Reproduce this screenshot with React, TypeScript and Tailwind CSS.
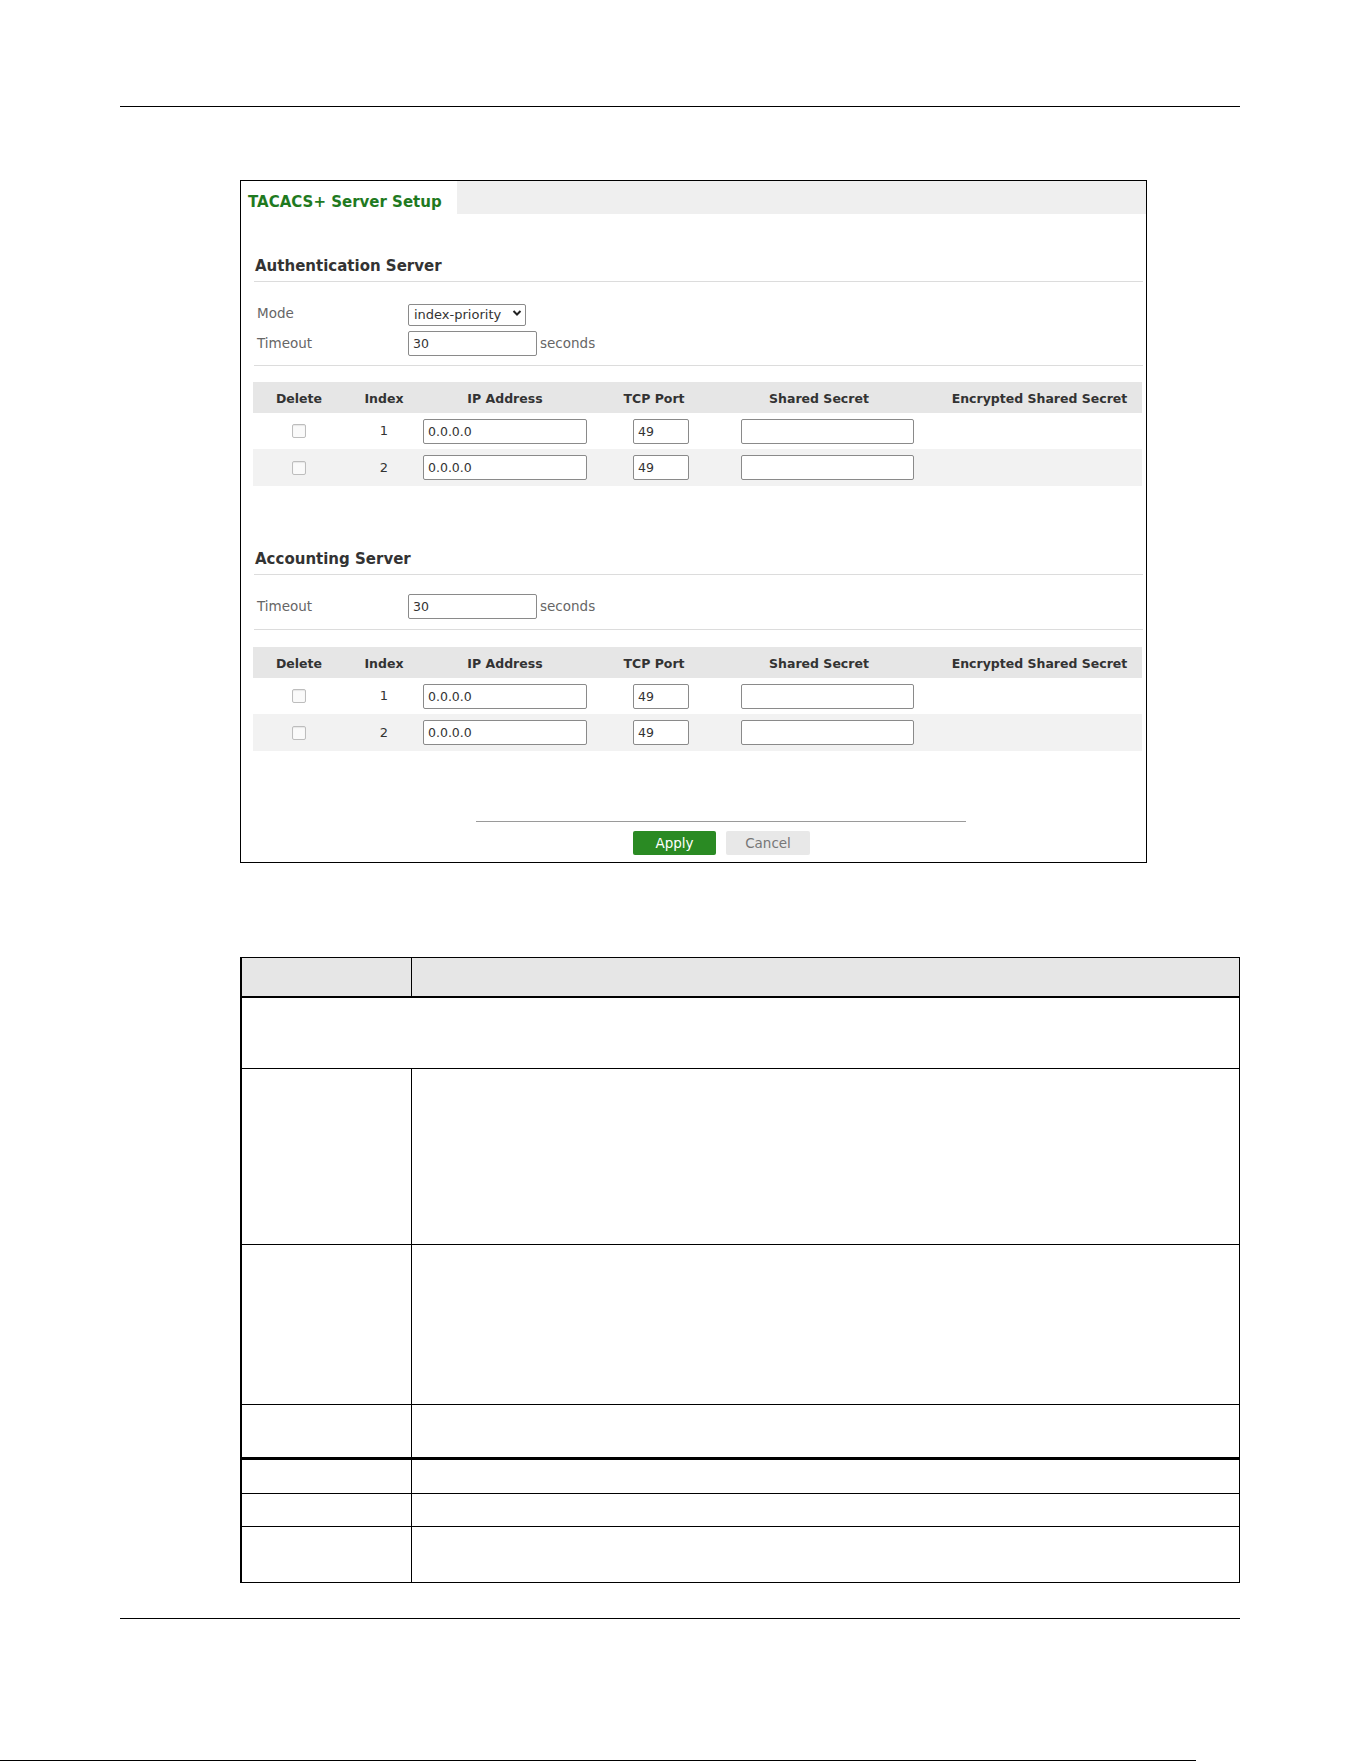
import React from "react";

function Check() {
  return (
    <input
      type="checkbox"
      className="appearance-none w-[14px] h-[14px] rounded-[2px] border border-[#bdbdbd] bg-[#fafafa] shadow-[inset_0_1px_1px_rgba(0,0,0,0.08)]"
    />
  );
}

function TextBox({ value, className }: { value: string; className: string }) {
  return (
    <input
      type="text"
      defaultValue={value}
      className={
        "h-[25px] border border-[#8a8a8a] rounded-[2px] bg-white px-[4px] text-[12.5px] text-[#333] outline-none " +
        className
      }
    />
  );
}

function ServerTable() {
  const rows = [1, 2];
  return (
    <div className="w-[889px]">
      <div className="grid grid-cols-[92px_78px_164px_134px_196px_1fr] h-[31px] pt-[4px] items-center bg-[#e6e6e6] text-[12.5px] font-bold text-[#333]">
        <div className="text-center">Delete</div>
        <div className="text-center">Index</div>
        <div className="text-center">IP Address</div>
        <div className="text-center">TCP Port</div>
        <div className="text-center">Shared Secret</div>
        <div className="text-center pl-[20px]">Encrypted Shared Secret</div>
      </div>
      {rows.map((i) => (
        <div
          key={i}
          className={
            "grid grid-cols-[92px_78px_164px_134px_196px_1fr] items-center text-[13px] text-[#333] " +
            (i === 1 ? "h-[36px] bg-white" : "h-[37px] bg-[#f2f2f2]")
          }
        >
          <div className="flex justify-center">
            <Check />
          </div>
          <div className="text-center">{i}</div>
          <div>
            <TextBox value="0.0.0.0" className="w-[164px]" />
          </div>
          <div>
            <TextBox value="49" className="ml-[46px] w-[56px]" />
          </div>
          <div>
            <TextBox value="" className="ml-[20px] w-[173px]" />
          </div>
          <div />
        </div>
      ))}
    </div>
  );
}

function Heading({ children }: { children: React.ReactNode }) {
  return (
    <div className="pl-[1px] pb-[5px] border-b border-[#dcdcdc] text-[15px] leading-[20px] font-bold text-[#333]">
      {children}
    </div>
  );
}

function TimeoutRow({ mt }: { mt: string }) {
  return (
    <div className={"flex items-center h-[25px] pl-[3px] " + mt}>
      <div className="w-[151px] text-[13.5px] text-[#666]">Timeout</div>
      <TextBox value="30" className="w-[129px]" />
      <span className="ml-[3px] text-[13.5px] text-[#666]">seconds</span>
    </div>
  );
}

export default function App() {
  return (
    <div className="w-[1361px] h-[1761px] bg-white font-['DejaVu_Sans',sans-serif] overflow-hidden">
      <div className="h-[106px]" />
      <div className="ml-[120px] w-[1120px] h-px bg-black" />

      {/* Panel */}
      <div className="mt-[73px] ml-[240px] w-[907px] h-[683px] border border-black flex flex-col">
        <div className="flex h-[33px] bg-[#efefef]">
          <div className="w-[216px] bg-white pl-[7px] pt-[13px] text-[15px] leading-[16px] font-bold text-[#1f7a1f]">
            TACACS+ Server Setup
          </div>
        </div>

        <div className="pl-[13px] pr-[3px]">
          <div className="mt-[42px]">
            <Heading>Authentication Server</Heading>
          </div>
          <div className="flex items-center h-[22px] pl-[3px] mt-[20px]">
            <div className="w-[151px] text-[13.5px] text-[#666]">Mode</div>
            <div className="relative w-[118px] h-[22px]">
              <select className="appearance-none w-full h-full border border-[#8a8a8a] rounded-[2px] bg-white pl-[5px] text-[13px] text-[#333] outline-none">
                <option>index-priority</option>
              </select>
              <svg
                className="absolute right-[4px] top-[7px] pointer-events-none"
                width="10"
                height="8"
                viewBox="0 0 10 8"
              >
                <path d="M1.5 2 L5 5.5 L8.5 2" fill="none" stroke="#222" strokeWidth="2" />
              </svg>
            </div>
          </div>
          <TimeoutRow mt="mt-[7px]" />
          <div className="mt-[9px] h-px bg-[#dcdcdc]" />
          <div className="mt-[16px] -ml-[1px]">
            <ServerTable />
          </div>

          <div className="mt-[63px]">
            <Heading>Accounting Server</Heading>
          </div>
          <TimeoutRow mt="mt-[19px]" />
          <div className="mt-[10px] h-px bg-[#dcdcdc]" />
          <div className="mt-[17px] -ml-[1px]">
            <ServerTable />
          </div>
        </div>

        <div className="mt-[70px] ml-[235px] w-[490px] h-px bg-[#9a9a9a]" />
        <div className="mt-[9px] ml-[392px] flex gap-[10px]">
          <button className="w-[83px] h-[24px] rounded-[2px] bg-[#2a8a23] text-white text-[13.5px] leading-[24px]">
            Apply
          </button>
          <button className="w-[84px] h-[24px] rounded-[2px] bg-[#e8e8e8] text-[#777] text-[13.5px] leading-[24px]">
            Cancel
          </button>
        </div>
      </div>

      {/* Description table */}
      <div className="mt-[94px] ml-[240px] w-[1000px] border-t border-r border-b border-l-2 border-black">
        <div className="flex h-[40px] bg-[#e6e6e6] border-b-2 border-black">
          <div className="w-[170px] border-r border-black" />
          <div className="flex-1" />
        </div>
        <div className="h-[71px] border-b border-black" />
        <div className="flex h-[176px] border-b border-black">
          <div className="w-[170px] border-r border-black" />
          <div className="flex-1" />
        </div>
        <div className="flex h-[160px] border-b border-black">
          <div className="w-[170px] border-r border-black" />
          <div className="flex-1" />
        </div>
        <div className="flex h-[55px] border-b-[3px] border-black">
          <div className="w-[170px] border-r border-black" />
          <div className="flex-1" />
        </div>
        <div className="flex h-[34px] border-b border-black">
          <div className="w-[170px] border-r border-black" />
          <div className="flex-1" />
        </div>
        <div className="flex h-[33px] border-b border-black">
          <div className="w-[170px] border-r border-black" />
          <div className="flex-1" />
        </div>
        <div className="flex h-[55px]">
          <div className="w-[170px] border-r border-black" />
          <div className="flex-1" />
        </div>
      </div>

      <div className="mt-[35px] ml-[120px] w-[1120px] h-px bg-black" />
      <div className="mt-[141px] w-[1196px] h-px bg-black" />
    </div>
  );
}
